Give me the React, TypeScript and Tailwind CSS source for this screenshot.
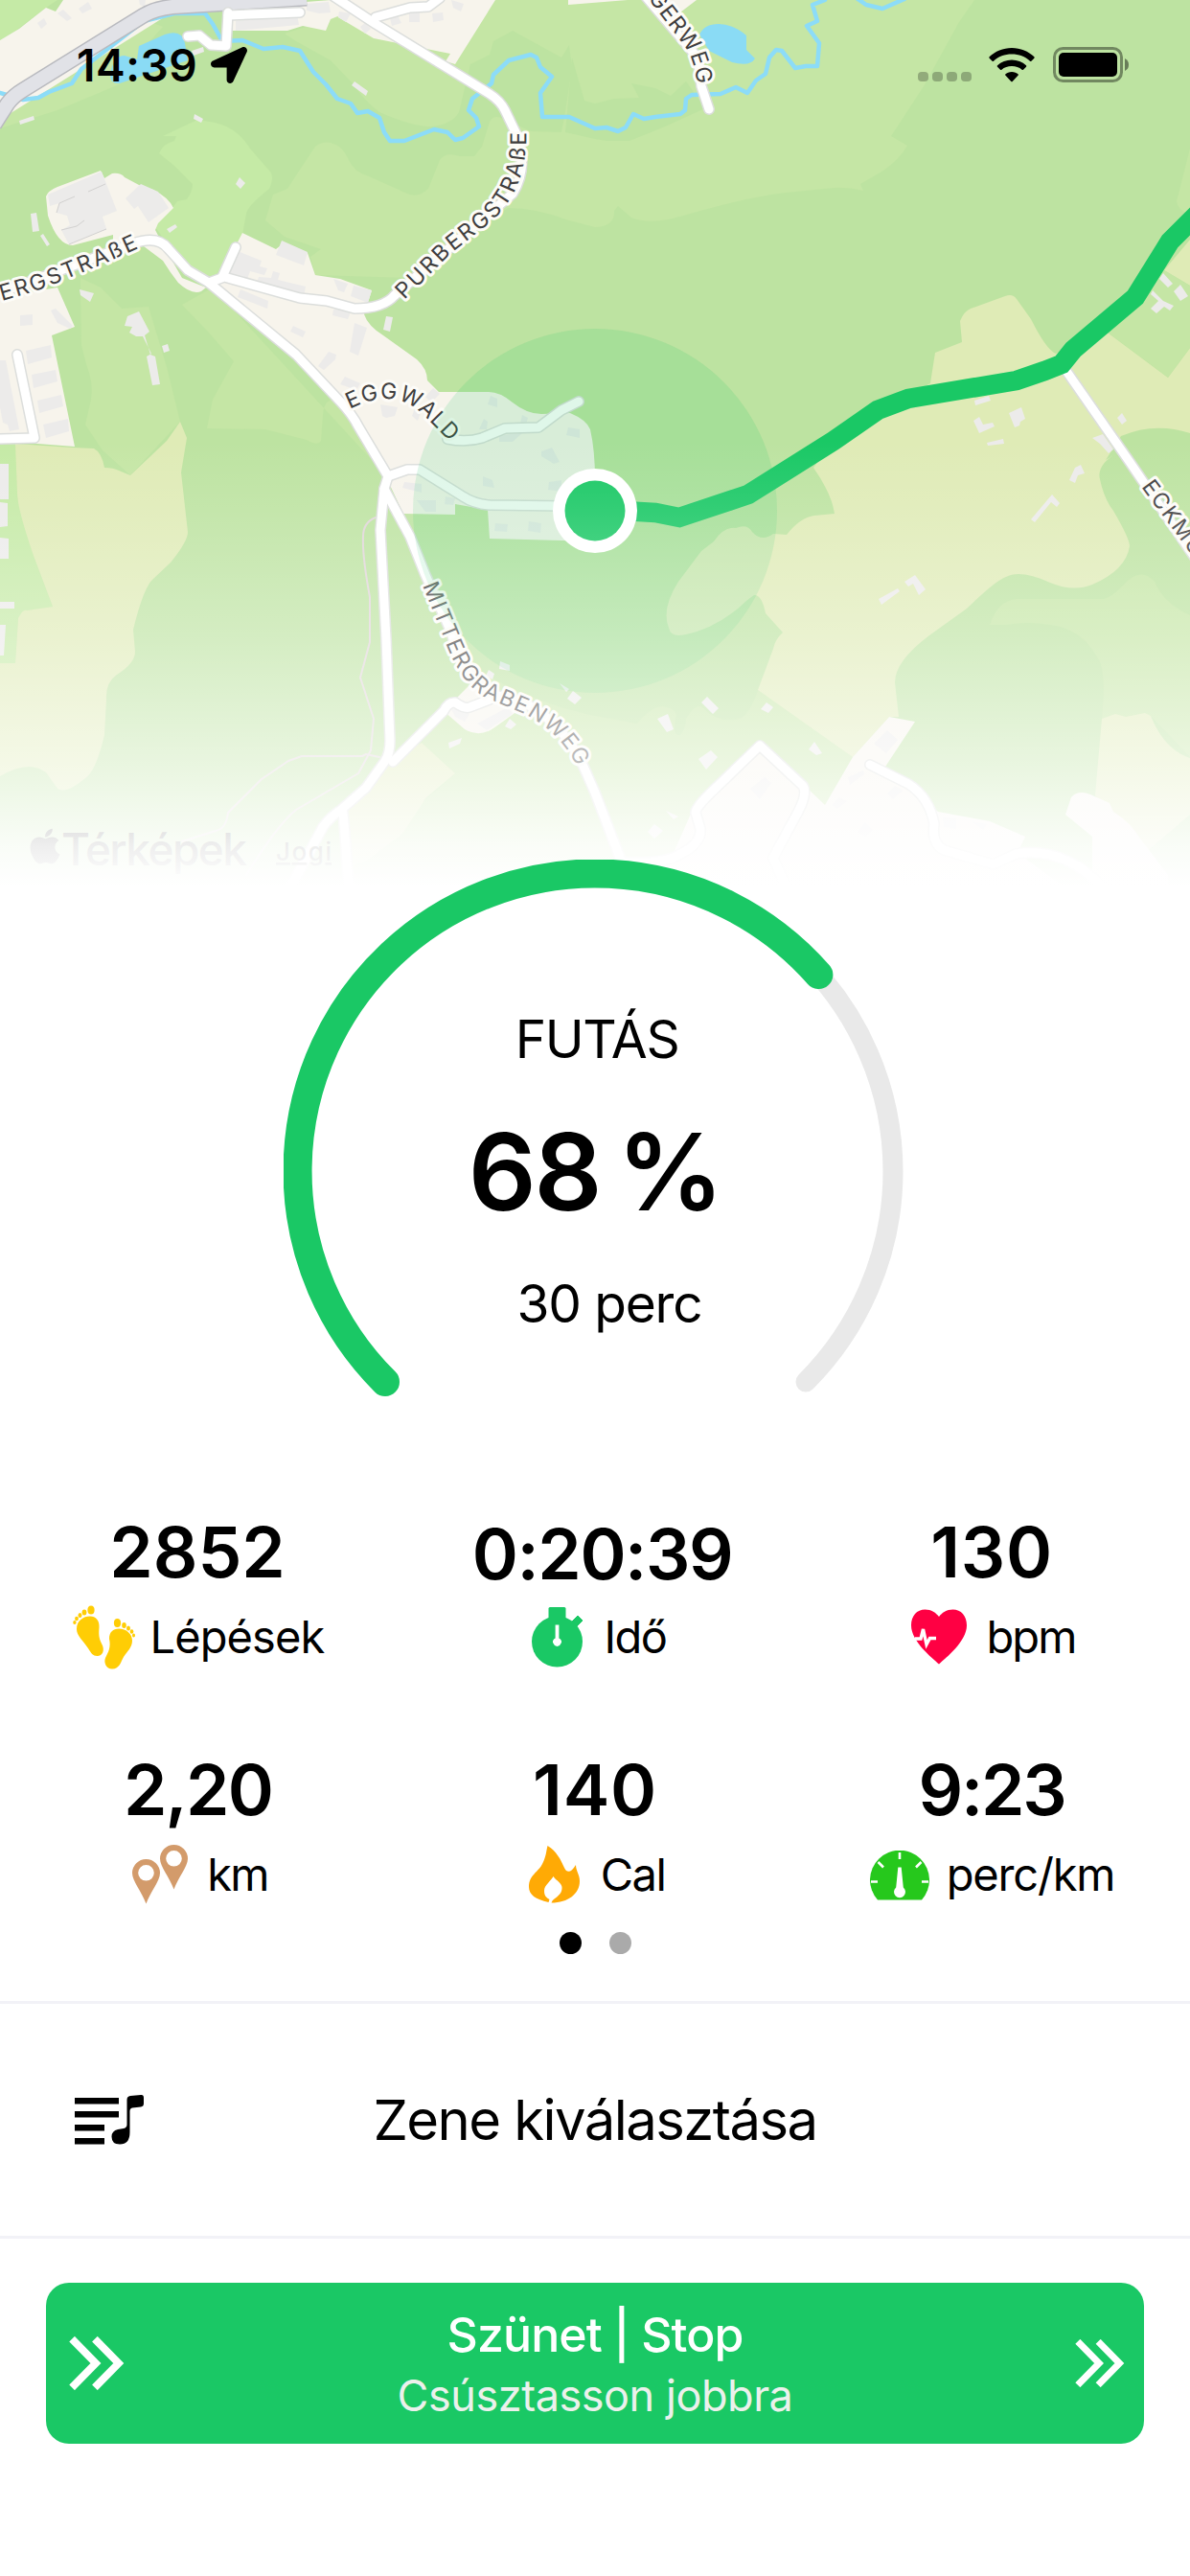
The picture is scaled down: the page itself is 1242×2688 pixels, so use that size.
import { ReactNode } from 'react'
import { FaApple, FaLocationArrow } from 'react-icons/fa'

const GREEN = '#1ac865'

const lightGreen = [
  'M345,0 L1017,0 L1001,23 L964,90 L930,142 L947,152 Q938,167 922,178 L898,192 L901,199 Q885,195 870,196 L820,201 Q779,206 720,223 Q680,236 659,227 L645,215 L641,220 Q642,236 621,237 L594,230 Q560,217 530,217 L428,290 L329,287 L324,268 L335,260 L297,247 L277,230 L285,203 L300,197 L313,177 L329,153 Q340,144 354,153 Q360,158 364,167 Q370,180 385,184 L425,202 Q436,207 447,197 L459,167 Q465,158 480,163 L495,163 L503,153 L511,127 Q515,120 523,123 L554,137 L586,138 L590,117 L597,70 L594,47 L586,60 L535,32 L515,43 L511,57 L491,67 L479,117 Q472,130 450,132 Q430,132 396,117 Q380,105 368,87 L345,63 L309,43 L297,35 L345,20 Z',
  'M0,134 L60,115 L115,92 L165,70 L185,62 L150,50 L170,28 L150,20 L100,50 L20,100 Z',
  'M84,290 L105,300 L127,322 L155,320 L164,350 L174,383 L188,440 L136,496 L107,470 L89,443 L95,417 Q98,400 90,380 L85,360 Z',
  'M222,300 L388,480 L352,417 Q338,415 337,433 L335,460 Q332,466 320,459 L277,448 L216,447 L222,417 L244,377 L218,347 L190,318 Z',
  'M1242,155 L1228,210 Q1228,218 1242,224 Z',
  'M1033,652 Q1041,627 1061,625 L1152,625 Q1160,623 1171,612 Q1190,590 1205,607 Q1215,630 1242,642 L1242,790 L1201,747 L1150,750 Q1155,700 1146,687 Q1128,655 1096,652 Q1072,648 1050,652 Z',
  'M440,775 L500,700 Q560,735 621,747 L665,755 Q680,737 692,737 Q706,740 706,747 Q700,768 710,767 Q716,760 716,750 Q728,730 735,740 Q750,755 772,750 Q783,745 791,720 L890,790 L861,840 L800,925 L368,925 L368,903 L475,807 Z',
]
const brightGreen = [
  'M0,0 L60,0 L48,8 L15,33 L0,42 Z',
  'M206,125 Q230,128 238,133 Q252,140 261,155 L281,178 Q287,184 281,197 Q258,215 257,223 L253,245 L222,292 L198,287 L162,237 Q165,228 180,217 L185,210 L195,208 Q201,200 201,192 L182,173 L166,160 Q170,150 182,147 L184,142 L170,142 Z',
  'M0,460 L17,463 L18,520 L35,580 L55,633 L28,637 L19,645 L16,692 L0,692 Z',
]
const yellow = [
  'M16,463 L75,467 L98,468 Q106,472 109,488 Q118,488 124,491 L136,496 L174,460 L188,440 L195,457 L189,493 L196,555 Q196,565 178,587 L160,604 Q150,612 139,657 L141,680 Q141,692 122,704 Q110,712 111,730 L109,767 Q100,805 89,812 Q65,832 58,820 L48,806 Q30,792 0,810 L0,692 L16,692 L19,645 Q24,635 28,637 L55,633 L35,580 Q18,530 18,515 Z',
  'M971,400 L976,368 L1004,357 L1002,335 Q1006,325 1013,322 L1049,309 Q1057,306 1061,312 L1076,333 Q1092,365 1102,369 L1156,347 L1219,394 L1242,363 L1242,452 Q1205,440 1170,455 L1154,480 L1167,472 Q1144,485 1148,500 Q1152,520 1162,533 Q1179,562 1179,570 Q1175,595 1140,610 Q1120,618 1096,608 Q1065,594 1050,602 Q1040,605 1009,635 L970,663 Q934,690 934,712 L938,748 L928,748 L890,790 L791,720 L807,677 Q809,667 817,660 L799,640 Q795,620 787,621 Q784,623 779,627 Q750,655 716,662 Q700,666 698,655 Q690,635 708,607 L732,575 L745,565 Q756,549 768,551 Q780,546 785,555 Q795,566 807,557 L821,558 Q835,540 850,538 L871,536 Q868,515 849,488 L870,460 Z',
  'M1215,282 L1242,250 L1242,298 Z',
  'M440,775 L475,807 L445,832 L420,870 L384,897 L364,905 L357,850 L380,827 L410,793 Z',
  'M1150,750 L1164,745 L1175,748 L1195,744 L1201,747 Q1215,782 1242,791 L1242,850 L1195,890 L1143,830 Z',
]
const beige = [
  'M0,42 L20,30 L48,8 L58,12 L66,0 L200,0 L0,125 Z',
  'M240,8 L345,0 L355,16 L345,20 L340,32 L316,27 L300,32 L236,32 Z',
  'M345,0 L517,0 L475,67 L465,64 L470,56 L390,40 L353,18 Z',
  'M593,0 L655,0 L593,5 Z',
  'M680,0 L727,0 L706,16 Z',
  'M48,205 Q50,199 60,195 L105,178 L109,186 L117,181 Q126,180 130,185 L145,193 L160,198 Q176,206 181,217 L165,233 L162,240 L170,255 L190,290 L215,300 L210,304 Q200,308 186,295 Q178,285 170,272 L150,257 L118,258 L118,245 L76,256 Q60,256 50,225 Z',
  'M0,310 L60,300 L78,341 L54,350 L78,466 L0,460 Z',
  'M253,243 L288,260 L297,253 L321,264 L329,287 L355,291 L388,303 L380,328 Q384,340 400,350 L435,375 Q446,385 446,397 L458,409 L510,409 Q522,409 535,420 Q550,432 565,432 L595,431 Q612,438 616,448 Q621,470 621,500 L625,565 L511,562 L509,532 L475,526 L475,537 L421,536 L404,500 L356,420 L309,370 L218,295 L234,280 Z',
  'M463,742 L490,715 L540,742 L515,760 Q500,770 485,761 Z',
  'M928,748 L955,753 L924,800 L979,847 L1033,857 L1070,873 L1062,890 L1110,925 L640,925 L650,898 L700,897 L725,840 L794,778 L840,820 L861,840 L890,790 Z',
  'M1112,850 L1118,832 Q1125,824 1138,829 L1158,838 L1162,847 Q1180,858 1190,875 L1219,913 L1219,925 L1140,925 L1140,873 Z',
]
const buildings = [
  'M39,24 L46,19 L49,25 L43,30 Z M60,14 L66,10 L75,19 L70,22 Z M82,9 L92,2 L96,9 L86,14 Z M145,0 L152,0 L151,7 L146,5 Z',
  'M320,4 L343,2 L345,13 L333,14 L320,11 Z M354,12 L366,14 L361,23 L353,18 Z M376,28 L381,24 L387,30 L381,35 Z',
  'M240,11 L313,6 L313,13 L240,17 Z M246,22 L310,15 L312,26 L246,32 Z',
  'M471,0 L484,4 L481,12 L473,8 Z M407,19 L415,16 L419,24 L409,27 Z M427,13 L438,13 L438,23 L427,23 Z M451,14 L462,13 L463,21 L452,23 Z',
  'M200,53 L212,49 L213,54 L202,58 Z M370,85 L384,95 L382,100 L367,89 Z M203,119 L212,124 L210,128 L202,124 Z M20,126 L35,121 L36,125 L21,130 Z M250,185 L256,191 L251,197 L246,192 Z',
  'M50,203 L106,179 L122,220 L107,226 L111,239 L72,255 L64,240 L73,235 L70,225 L59,222 L62,212 L52,215 Z',
  'M147,192 L165,200 L176,217 L155,232 L144,215 L140,218 L131,207 Z',
  'M32,223 L38,222 L41,241 L34,242 Z M42,246 L45,244 L52,255 L49,257 Z M174,239 L183,234 L185,237 L177,243 Z M83,302 L98,306 L94,315 L84,308 Z',
  'M133,330 L145,325 L156,346 L151,350 L157,370 L162,372 L167,401 L159,402 L153,372 L158,369 L149,351 L142,351 L135,347 L138,341 L130,340 Z M169,361 L175,359 L177,366 L171,368 Z',
  'M21,329 L34,328 L34,339 L21,340 Z M53,324 L58,322 L76,340 L73,343 L60,337 Z',
  'M27,366 L53,360 L54,373 L29,380 Z M33,391 L58,386 L60,398 L35,405 Z M39,418 L64,412 L66,424 L41,431 Z M45,443 L71,437 L72,450 L48,457 Z M0,376 L6,376 L20,448 L10,450 L8,443 L3,441 L0,425 Z',
  'M248,262 L273,272 L271,278 L279,280 L276,287 L261,283 L257,294 L238,285 Z M294,251 L321,263 L317,277 L288,266 Z M270,289 L283,290 L285,283 L292,285 L290,292 L319,299 L317,309 L268,295 Z',
  'M251,302 L280,314 L279,322 L248,310 Z M348,291 L363,296 L359,305 L353,303 Z M369,298 L388,303 L384,316 L366,309 Z M348,323 L367,323 L363,333 L347,329 Z M403,330 L410,331 L407,346 L400,344 Z',
  'M370,337 L383,342 L374,371 L365,367 Z M306,340 L319,346 L316,352 L303,346 Z M343,367 L351,370 L350,375 L338,386 L332,382 Z M360,393 L376,400 L372,407 L355,401 Z M397,422 L415,425 L412,434 L403,436 L399,434 Z M433,426 L440,428 L436,439 L430,434 Z M452,405 L459,411 L450,420 L444,414 Z',
  'M512,413 L519,416 L519,425 L509,422 Z M505,437 L509,440 L508,448 L500,448 Z M545,433 L551,436 L549,443 L543,442 Z M593,446 L605,448 L605,457 L591,454 Z M565,471 L576,467 L584,482 L578,484 L565,476 Z M521,454 L545,452 L535,461 L521,461 Z',
  'M504,497 L514,501 L516,509 L504,507 Z M573,503 L586,501 L586,513 L572,511 Z M422,503 L440,505 L440,514 L420,509 Z M435,522 L455,522 L455,534 L444,534 Z M465,518 L475,520 L473,527 L464,526 Z M517,546 L530,547 L529,555 L516,554 Z M552,544 L565,546 L564,556 L551,554 Z',
  'M0,484 L9,484 L9,521 L0,521 Z M0,524 L8,525 L8,549 L0,550 Z M0,561 L9,562 L9,583 L0,583 Z M0,628 L15,628 L15,635 L0,635 Z M0,652 L6,652 L4,684 L0,684 Z',
  'M522,690 L532,694 L532,700 L521,698 Z M510,699 L516,703 L514,709 L507,705 Z M584,713 L594,719 L591,722 Z M598,721 L607,728 L600,735 L592,729 Z M532,750 L539,756 L533,761 L527,758 Z M468,775 L482,770 L480,776 L469,781 Z M470,738 L490,745 L485,753 L475,748 Z M498,755 L530,738 L535,745 L508,762 Z',
  'M1210,291 L1214,285 L1224,296 L1219,300 Z M1203,303 L1214,314 L1225,319 L1221,324 L1215,320 L1207,327 L1201,322 L1209,314 L1201,307 Z M1225,304 L1232,297 L1240,309 L1232,314 Z',
  'M1017,418 L1032,413 L1034,418 L1018,423 Z M1053,431 L1066,425 L1070,437 L1065,440 L1064,444 L1059,446 Z M1016,439 L1022,435 L1026,443 L1036,441 L1038,445 L1022,452 Z M1030,462 L1047,458 L1048,463 L1031,465 Z M1140,457 L1151,453 L1162,469 L1157,473 L1148,463 Z M1166,436 L1171,431 L1176,439 L1171,443 Z',
  'M1122,488 L1128,485 L1132,494 L1125,496 L1122,504 L1116,501 Z M1076,542 L1098,516 L1106,525 L1103,529 L1097,524 L1080,545 Z M944,607 L955,600 L966,615 L959,621 L953,609 L948,612 Z M917,625 L937,614 L939,617 L920,631 Z',
  'M732,733 L738,727 L750,739 L744,745 Z M686,750 L697,745 L703,761 L696,764 Z M800,733 L807,738 L802,744 L794,740 Z M729,792 L742,783 L749,790 L737,803 Z M844,782 L850,774 L858,786 L852,788 Z M676,868 L683,860 L692,867 L683,875 Z M695,846 L708,852 L703,855 Z',
  'M912,776 L926,762 L937,772 L925,786 Z M885,811 L901,804 L902,808 L887,819 Z M783,823 L798,811 L805,817 L793,834 Z M926,828 L934,820 L942,825 L932,834 Z M868,840 L876,832 L884,836 L874,844 Z M895,868 L903,858 L911,866 L903,873 Z M984,853 L998,854 L998,865 L985,863 Z M1014,857 L1030,860 L1026,866 Z',
]
const roads = [
  'M412,308 Q400,322 370,322 L341,314 L313,311 L234,289 L218,295',
  'M348,-4 L392,25 L511,98 Q522,105 527,115 L539,140 Q552,175 535,202 L412,308',
  'M392,18 L428,8 L447,7 L459,-2',
  'M-4,307 L139,254 Q165,245 176,260 L196,282 L218,295 L309,370 L356,420 Q368,433 374,445 L405,497 L401,510 L397,553 L403,667 L407,773 Q407,786 402,794 L382,822 L356,845 Q345,852 337,863 L301,930',
  'M246,258 L232,289',
  'M405,497 L425,490 L438,490 L483,518 Q495,526 511,527 L590,528',
  'M467,458 Q487,462 503,457 L527,447 L562,446 L586,428 L604,419',
  'M401,510 L428,560 L444,600 L471,660 Q482,705 511,723 L554,737 Q585,755 606,793 L621,827 L649,900',
  'M410,795 L463,742 Q468,732 475,733 Q485,740 490,738 L511,730',
  'M358,848 L360,870 L364,930',
  'M653,900 Q695,902 712,890 Q732,880 731,865 L726,848 Q726,843 740,829 L793,778 L838,820 Q843,828 833,847 L807,895 L820,925',
  'M908,798 L948,818 Q970,832 975,860 Q972,880 985,887 L1037,902 L1060,891 Q1110,883 1150,925',
  'M1108,380 L1179,482 L1250,586',
  'M18,370 L36,457 L-4,458',
  'M238,13 L236,48 L220,47 L208,37 L196,38',
  'M238,16 L313,13',
  'M660,-20 L728,60 L732,90 L740,114',
]
const trails = [
  'M392,540 Q379,545 379,560 Q378,580 386,623 L386,670 L376,707 L390,750 L387,783 L374,807 L309,845 Q290,860 257,913',
  'M396,790 L382,787 L378,789 L315,789 L301,794 L273,813 L238,848 Q236,865 225,867 L190,878',
]
const streams = [
  'M0,97 L24,104 L40,102 L51,96 L75,87 L85,72 L150,22 L182,14 L214,14 L222,25 L232,43 L253,42 L275,51 L295,49 L313,53 L327,75 L340,88 L352,103 L366,108 L373,118 L384,116 L396,123 L401,138 L407,147 L422,147 L453,135 L467,138 L475,146 L483,144 L500,132 L497,123 L489,115 L493,103 L513,87 L515,78 L531,63 L554,57 L560,60 L564,70 L576,80 L564,97 L566,122 L594,122 L621,134 L633,133 L645,137 L653,133 L661,119 L672,124 L684,122 L710,119 L715,115 L716,103 L722,99 L752,98 L768,91 L780,97 L789,84 L799,77 L803,60 L810,52 L816,53 L830,71 L841,69 L853,69 L855,45 L842,27 L853,22 L848,5 L861,0',
  'M894,-2 L904,5 L921,9 L944,-1',
]
const ponds = [
  'M145,48 L172,36 Q190,30 193,45 L196,63 L125,87 Q115,88 115,78 Q118,58 130,58 L143,62 Z',
  'M730,36 Q735,25 750,25 Q765,25 779,37 L779,52 L788,61 Q783,70 764,65 L740,53 Z',
]
const highway = 'M-6,130 L8,108 Q14,100 24,94 L150,16 Q162,9 180,7 L320,-2'
const route = 'M1256,217 L1221,252 L1185,310 L1120,365 L1108,380 L1090,387 L1061,397 L948,416 L916,428 L870,460 L781,516 L709,540 L684,535 L650,533'

const labels = [
  { id: 'l1', name: 'PURBERGSTRAßE', d: 'M422,313 L471,264 L507,236 Q552,200 549,135', gap: 2.5 },
  { id: 'l2', name: 'ERGSTRAßE', d: 'M2,314 L40,303 L109,275 L160,252', gap: 2.4 },
  { id: 'l3', name: 'EGGWALD', d: 'M365,427 Q405,406 434,426 Q448,438 476,468', gap: 1.3 },
  { id: 'l4', name: 'MITTERGRABENWEG', d: 'M441,611 L463,665 Q480,712 505,727 L545,744 Q588,765 606,808', gap: 1.9 },
  { id: 'l5', name: 'GERWEG', d: 'M676,-2 L716,50 Q727,66 729,104', gap: 1.3 },
  { id: 'l6', name: 'ECKMÜ', d: 'M1191,508 L1260,601', gap: 1.8 },
]

function Shapes({ paths, fill }: { paths: string[]; fill: string }) {
  return (
    <g fill={fill}>
      {paths.map((d, i) => (
        <path key={i} d={d} />
      ))}
    </g>
  )
}

function Lines({ paths, color, width }: { paths: string[]; color: string; width: number }) {
  return (
    <g fill="none" stroke={color} strokeWidth={width} strokeLinecap="round" strokeLinejoin="round">
      {paths.map((d, i) => (
        <path key={i} d={d} />
      ))}
    </g>
  )
}

function RouteMap() {
  return (
    <svg viewBox="0 0 1242 930" className="block h-[930px] w-full shrink-0">
      <defs>
        <linearGradient id="fade" x1="0" y1="0" x2="0" y2="1">
          <stop offset="0" stopColor="#fff" stopOpacity="0" />
          <stop offset="0.155" stopColor="#fff" stopOpacity="0.11" />
          <stop offset="0.43" stopColor="#fff" stopOpacity="0.35" />
          <stop offset="0.71" stopColor="#fff" stopOpacity="0.66" />
          <stop offset="0.9" stopColor="#fff" stopOpacity="0.92" />
          <stop offset="0.99" stopColor="#fff" />
        </linearGradient>
        {labels.map((l) => (
          <path key={l.id} id={l.id} d={l.d} />
        ))}
      </defs>
      <rect width="1242" height="930" fill="#bde3a1" />
      <Shapes paths={lightGreen} fill="#c5e6a5" />
      <path d="M590,138 L597,60 L610,105 L621,108 L641,103 L667,102 L659,87 L684,92 L700,100 L716,85 L736,113 L692,133 L657,147 L633,147 L621,145 Z" fill="#bde3a1" />
      <Shapes paths={brightGreen} fill="#c5eaa6" />
      <Shapes paths={yellow} fill="#dfebb6" />
      <path d="M1156,347 L1215,282 L1242,298 L1242,363 L1219,394 Z" fill="#c5e6a5" />
      <Shapes paths={beige} fill="#f7f4ec" />
      <Lines paths={streams} color="#8cdcf8" width={4.5} />
      <Shapes paths={ponds} fill="#8adbf5" />
      <Shapes paths={buildings} fill="#ecebea" />
      <path d="M59,222 L62,212 L78,205 M64,240 L80,236 L88,230 M92,200 L110,192 M72,255 L111,239" fill="none" stroke="#d2d1d0" />
      <Lines paths={trails} color="#e0d6d8" width={2} />
      <path d={highway} fill="none" stroke="#b9babf" strokeWidth="17" />
      <path d={highway} fill="none" stroke="#e1e2e7" strokeWidth="14" />
      <Lines paths={roads} color="#dcdedc" width={12} />
      <Lines paths={roads} color="#ffffff" width={9} />
      <g className="font-['Inter',sans-serif] text-[23px] font-normal" fill="#3f3e3e" stroke="#fdfcf8" strokeWidth="6" strokeLinejoin="round" paintOrder="stroke">
        {labels.map((l) => (
          <text key={l.id} letterSpacing={l.gap}>
            <textPath href={`#${l.id}`}>{l.name}</textPath>
          </text>
        ))}
      </g>
      <circle cx="621" cy="533" r="190" fill={GREEN} opacity="0.14" />
      <path d={route} fill="none" stroke={GREEN} strokeWidth="20.5" />
      <circle cx="621" cy="533" r="44" fill="#fff" />
      <circle cx="621" cy="533" r="31.5" fill={GREEN} />
      <FaApple x="26" y="862" size={42} color="#303030" />
      <g className="font-['Inter',sans-serif]" fill="#303030">
        <text x="64" y="903" fontSize="46" fontWeight="500" textLength="194">Térképek</text>
        <text x="288" y="898" fontSize="26" fontWeight="500" textLength="58" textDecoration="underline">Jogi</text>
      </g>
      <rect y="460" width="1242" height="470" fill="url(#fade)" />
    </svg>
  )
}

function StatusBar() {
  return (
    <div className="absolute inset-x-0 top-0 flex h-[136px] items-center pr-[63px] pl-[80px] text-black">
      <span className="text-[46px] leading-none font-semibold tracking-[0.012em]">14:39</span>
      <FaLocationArrow className="ml-[14px] size-[38px]" />
      <div className="ml-auto flex gap-[4px] pt-[24px] opacity-25">
        {[0, 1, 2, 3].map((n) => (
          <i key={n} className="h-[10px] w-[11px] rounded-[4px] bg-black" />
        ))}
      </div>
      <svg viewBox="0 0 48 36" className="ml-[18px] h-[36px] w-[48px]">
        <path d="M24 0C14.900 0 6.600 3.500 0.600 9.300Q0 10 0.600 10.700L3.600 13.700Q4.300 14.300 5 13.700C10 9 16.700 6.500 24 6.500S38 9 43 13.700Q43.700 14.300 44.400 13.700L47.400 10.700Q48 10 47.400 9.300C41.400 3.500 33.100 0 24 0Z" />
        <path d="M24 12.500C18.200 12.500 13 14.700 9 18.300Q8.300 19 9 19.700L12 22.700Q12.700 23.300 13.400 22.700C16.200 20.300 19.900 19 24 19S31.800 20.300 34.600 22.700Q35.300 23.300 36 22.700L39 19.700Q39.700 19 39 18.300C35 14.700 29.800 12.500 24 12.500Z" />
        <path d="M24 25C21.300 25 18.900 26 17.300 27.400Q16.700 28 17.300 28.600L23.300 35Q24 35.700 24.700 35L30.700 28.600Q31.300 28 30.700 27.400C29.100 26 26.700 25 24 25Z" />
      </svg>
      <svg viewBox="0 0 80 38" className="ml-[19px] h-[38px] w-[80px]">
        <rect x="1.500" y="1.500" width="70" height="34" rx="9" fill="none" stroke="#000" strokeOpacity="0.4" strokeWidth="3" />
        <rect x="6" y="6" width="61" height="25" rx="5" />
        <path d="M75 12Q79 14 79 18.500T75 25Z" opacity="0.45" />
      </svg>
    </div>
  )
}

function ProgressRing() {
  return (
    <section className="relative -mt-[33px] flex h-[678px] flex-col items-center pt-[147px]">
      <svg viewBox="296 897 650 580" className="absolute top-0 left-[296px] h-[580px] w-[650px]" fill="none" strokeLinecap="round">
        <path d="M402 1442A310.500 310.500 0 1 1 841 1442" stroke="#e9e9e9" strokeWidth="21" />
        <path d="M402 1442A310.500 310.500 0 1 1 854.400 1017.100" stroke={GREEN} strokeWidth="30" />
      </svg>
      <h2 className="pl-1 text-[55px] leading-[80px] tracking-[-0.025em]">FUTÁS</h2>
      <p className="mt-[29px] text-[111px] leading-[140px] font-semibold tracking-[-0.02em] [word-spacing:-8px]">68 %</p>
      <p className="mt-[27px] pl-[30px] text-[55px] leading-[80px] tracking-[-0.021em]">30 perc</p>
    </section>
  )
}

const FeetIcon = (
  <svg viewBox="0 0 65 67" className="h-[67px] w-[65px]" fill="#ffcd05">
    <ellipse cx="19" cy="5" rx="3.600" ry="4.500" />
    <ellipse cx="12" cy="7.500" rx="2.400" ry="3" />
    <ellipse cx="7.500" cy="10.500" rx="2" ry="2.500" />
    <ellipse cx="4" cy="14" rx="1.900" ry="2.200" />
    <ellipse cx="1.900" cy="18" rx="1.700" ry="1.900" />
    <path d="M4 25C4 16 11 11.500 18 11.500C24 11.500 28 16 27.500 23C27 30 27 34 30 40C34 47 31 53 25.500 53C21 53 19 50 16 45C11 37 4 32 4 25Z" />
    <ellipse cx="46.500" cy="18.500" rx="3.600" ry="4.500" />
    <ellipse cx="53.500" cy="21" rx="2.300" ry="2.900" />
    <ellipse cx="58" cy="24" rx="2" ry="2.500" />
    <ellipse cx="61.500" cy="27.500" rx="1.800" ry="2.200" />
    <ellipse cx="63.500" cy="31.500" rx="1.500" ry="1.900" />
    <path d="M38 35C38 28 42 24.500 48 24.500C56 24.500 62 30 62 37C62 44 57 48 53 54C50 59 49 66.500 41 66.500C35 66.500 32 60 34 55C37 49 40 44 38 35Z" />
  </svg>
)
const TimerIcon = (
  <svg viewBox="0 0 54 63" className="h-[63px] w-[54px]" fill={GREEN}>
    <circle cx="26.500" cy="36" r="26.500" />
    <rect x="17.500" y="0" width="18" height="14" rx="1.500" />
    <path d="M41 16L48 9L53 14L46 21Z" stroke={GREEN} strokeLinejoin="round" />
    <path d="M24.600 18.500H28.400V32.500Q31.500 34 31 37Q30 40 26.500 41Q23 40 22 37Q21.500 34 24.600 32.500Z" fill="#fff" />
  </svg>
)
const HeartIcon = (
  <svg viewBox="0 0 58 58" className="h-[58px] w-[58px]">
    <path d="M29 57.500C22 51 0 34 0 17C0 7 6 0.500 14.500 0.500C21 0.500 26 4 29 8C32 4 37 0.500 43.500 0.500C52 0.500 58 7 58 17C58 34 36 51 29 57.500Z" fill="#ff0043" />
    <path d="M4 31H10L12.500 21L16 37L19.500 30.500H26" fill="none" stroke="#fff" strokeWidth="3.400" />
  </svg>
)
const PinsIcon = (
  <svg viewBox="0 0 58 62" className="h-[62px] w-[58px]">
    <g fill="#d39b6b" fillRule="evenodd">
      <path d="M14.500 15A14.500 14.500 0 0 0 0 29.500C0 38 10 49 14.500 61.500C19 49 29 38 29 29.500A14.500 14.500 0 0 0 14.500 15ZM14.500 21A8.300 8.300 0 1 1 14.500 37.600A8.300 8.300 0 1 1 14.500 21Z" />
      <path d="M43.500 0A14.500 14.500 0 0 0 29 14.500C29 23 39 34 43.500 46.500C48 34 58 23 58 14.500A14.500 14.500 0 0 0 43.500 0ZM43.500 6A8.300 8.300 0 1 1 43.500 22.600A8.300 8.300 0 1 1 43.500 6Z" />
    </g>
  </svg>
)
const FlameIcon = (
  <svg viewBox="0 0 54 60" className="h-[60px] w-[54px]" fill="#ffaa05">
    <path d="M19.500 0C29 6 33 14 37 23C40 29 44 28 49 20C49 26 53 30 53 37C53 50 41 59.500 23.500 59.500Q24.500 56.500 26.500 55.500C31 52 35 49 34.500 43C33.500 38 29 37 25.500 32C23 37 16 41 16 47C16 52 18 54 21.500 56L20.500 59C7 56 0 51 0 43C0 30 10 28 14.500 18C18 11 18 6 19.500 0Z" />
  </svg>
)
const GaugeIcon = (
  <svg viewBox="0 0 62 52" className="mt-[1px] h-[52px] w-[62px]">
    <path d="M8 51.500A31 31 0 1 1 54 51.500Z" fill="#26c81c" />
    <path d="M31 2V9M8.500 12L14 17.500M53.500 12L48 17.500M1 32.500H8M61 32.500H54" stroke="#fff" strokeWidth="2.600" />
    <path d="M29.300 17.500H32.700L34.800 38.500A6 6 0 1 1 27.200 38.500Z" fill="#fff" />
  </svg>
)

type StatProps = { value: string; label: string; icon: ReactNode; row: string; num: string }

const stats: StatProps[] = [
  { value: '2852', label: 'Lépések', icon: FeetIcon, row: 'gap-[16px] tracking-[-0.9px]', num: 'tracking-[0em] pr-[2px]' },
  { value: '0:20:39', label: 'Idő', icon: TimerIcon, row: 'gap-[22px] pl-[8px] tracking-[-1.6px]', num: 'tracking-[-0.02em] pt-[2px] pl-[15px]' },
  { value: '130', label: 'bpm', icon: HeartIcon, row: 'gap-[20px] pl-[4px] tracking-[-1.9px]', num: 'tracking-[0.01em]' },
  { value: '2,20', label: 'km', icon: PinsIcon, row: 'gap-[20px] pl-[4px] tracking-[-1.8px]', num: 'tracking-[-0.025em] pr-[1px]' },
  { value: '140', label: 'Cal', icon: FlameIcon, row: 'gap-[21px] pl-[4px] tracking-[-1.5px]', num: 'tracking-[0.01em]' },
  { value: '9:23', label: 'perc/km', icon: GaugeIcon, row: 'gap-[18px] pl-[1px] tracking-[-1.2px]', num: 'tracking-[-0.03em]' },
]

function Stat({ value, label, icon, row, num }: StatProps) {
  return (
    <div className="flex h-[248px] flex-col items-center">
      <div className={`h-[98px] text-[73px] leading-[90px] font-semibold ${num}`}>{value}</div>
      <div className={`flex h-[70px] items-center ${row}`}>
        {icon}
        <span className="text-[47px] leading-[70px]">{label}</span>
      </div>
    </div>
  )
}

function Chevrons({ className }: { className: string }) {
  return (
    <svg viewBox="0 0 56 54" className={className} fill="none" stroke="#fff" strokeWidth="7.600">
      <path d="M3 2.500L27 27L3 51.500M26 2.500L50 27L26 51.500" />
    </svg>
  )
}

export default function App() {
  return (
    <main className="relative flex h-[2688px] w-[1242px] flex-col overflow-hidden bg-white font-['Inter',sans-serif] text-black">
      <RouteMap />
      <StatusBar />
      <ProgressRing />

      <section className="grid h-[441px] grid-cols-3">
        {stats.map((s) => (
          <Stat key={s.label} {...s} />
        ))}
      </section>
      <div className="flex h-[72px] justify-center gap-[29px]">
        <i className="size-[23px] rounded-full bg-black" />
        <i className="size-[23px] rounded-full bg-[#aaaaaa]" />
      </div>

      <section className="relative flex h-[248px] items-center justify-center border-y-[3px] border-[#f2f2f7]">
        <svg viewBox="0 0 72 52" className="absolute left-[78px] h-[52px] w-[72px]">
          <path d="M0 3H46V9.500H0ZM0 17H46V23.500H0ZM0 31H31V37.500H0ZM0 45H31V51.500H0Z" />
          <path d="M54.500 5Q54.500 1.500 58 1L69 0Q72 -0.200 72 3V9Q72 12 69 12.500L60 13.500Q57.500 14 57.500 17V39Q57.500 51.500 47 51.500Q38.500 51.500 38.500 43.500Q38.500 37.500 45 36L51 35Q54.500 34 54.500 31Z" />
        </svg>
        <span className="text-[58px] leading-[80px] tracking-[-0.027em]">Zene kiválasztása</span>
      </section>

      <section className="px-[48px] pt-[46px]">
        <button className="flex h-[168px] w-full items-center justify-between rounded-[24px] bg-[#1ac865] pr-[20px] pl-[24px] text-white">
          <Chevrons className="h-[56px] w-[58px]" />
          <span className="-ml-[10px] flex flex-col items-center pt-[3px]">
            <span className="text-[50px] leading-[63px] font-medium tracking-[-0.018em]">Szünet | Stop</span>
            <span className="text-[45px] leading-[63px] tracking-[-0.01em] text-[#ebf1ec]">Csúsztasson jobbra</span>
          </span>
          <Chevrons className="h-[50px] w-[52px]" />
        </button>
      </section>
    </main>
  )
}
